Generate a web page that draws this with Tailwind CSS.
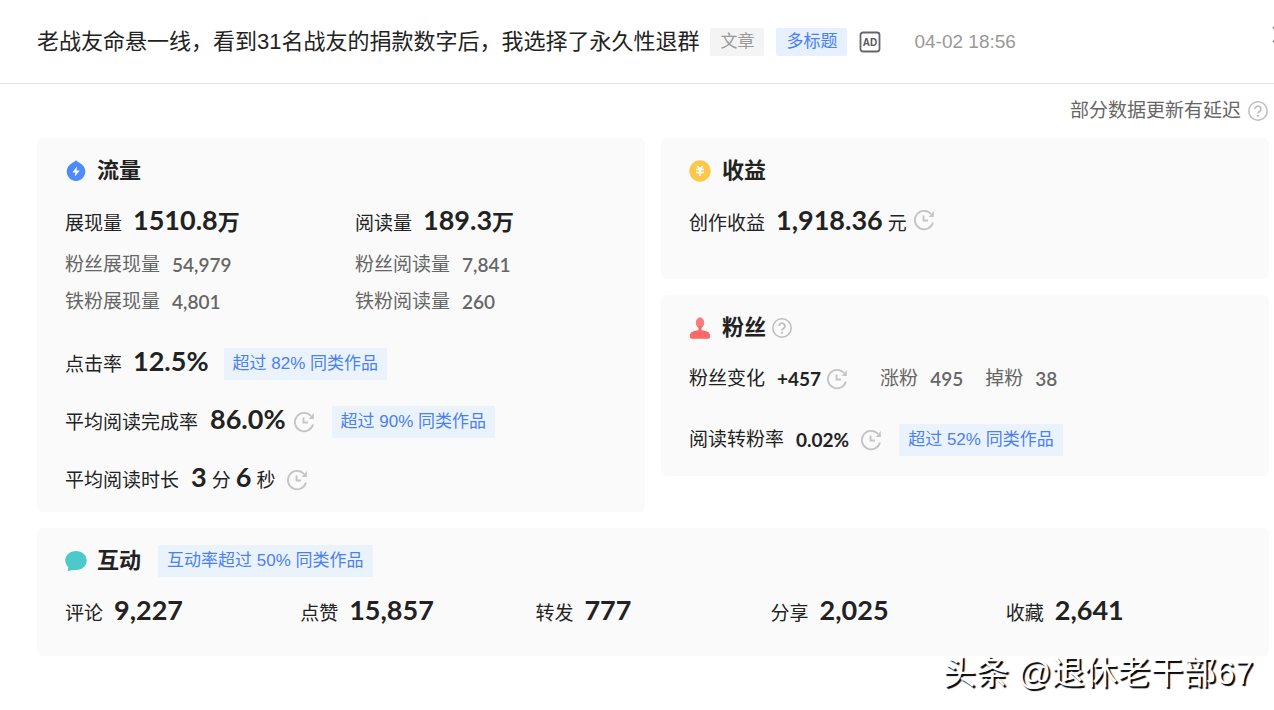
<!DOCTYPE html>
<html lang="zh-CN">
<head>
    <meta charset="UTF-8">
    <meta name="viewport" content="width=device-width, initial-scale=1.0">
    <title>作品数据</title>
    <script src="https://cdn.jsdelivr.net/npm/@tailwindcss/browser@4"></script>
</head>
<body class="relative min-h-screen overflow-x-hidden bg-white font-['Liberation_Sans','Noto_Sans_CJK_SC',sans-serif] text-[19px] leading-7 text-[#222]">
    <!-- Shared icons -->
    <svg class="hidden">
        <symbol id="clock" viewBox="0 0 22 22">
            <g fill="none" stroke="#c4c4c4" stroke-width="1.8">
                <path d="M18 5A9.2 9.2 0 1 0 20 13.5"/>
                <path d="M10.5 6.5v5H15"/>
            </g>
            <path d="M20.8 2v6h-5z" fill="#c4c4c4"/>
        </symbol>
        <symbol id="help" viewBox="0 0 22 22">
            <g fill="none" stroke="#bfbfbf">
                <circle cx="11" cy="11" r="9.2" stroke-width="1.6"/>
                <path d="M8.1 9a2.9 2.9 0 1 1 4.5 2.4c-1.1.7-1.6 1.1-1.6 2.2" stroke-width="1.8"/>
            </g>
            <circle cx="11" cy="15.8" r="1.1" fill="#bfbfbf"/>
        </symbol>
    </svg>

    <header class="flex h-[84px] items-center border-b border-[#e4e4e4] pl-[37px]">
        <h1 class="text-[22px] whitespace-nowrap">老战友命悬一线，看到31名战友的捐款数字后，我选择了永久性退群</h1>
        <span class="ml-[11px] rounded-xs bg-[#f4f4f4] px-[10px] text-[17px] text-[#999]">文章</span>
        <span class="ml-3 rounded-xs bg-[#e6f0ff] px-[10px] text-[17px] text-[#4a80f0]">多标题</span>
        <svg class="ml-3 size-[22px]" viewBox="0 0 22 22" role="img" aria-label="AD">
            <rect x="1.5" y="1.5" width="19" height="19" rx="2.5" fill="none" stroke="#666" stroke-width="1.8"/>
            <text x="11" y="15" text-anchor="middle" font-size="10" font-weight="700" fill="#555">AD</text>
        </svg>
        <time class="ml-[33px] text-[19px] whitespace-nowrap text-[#999]">04-02 18:56</time>
        <button type="button" aria-label="关闭" class="absolute top-[25px] -right-[16px]">
            <svg class="size-5" viewBox="0 0 20 20" fill="none" stroke="#888" stroke-width="1.8"><path d="M3 2l14 15M17 2L3 17"/></svg>
        </button>
    </header>

    <main class="pr-[5px] pl-[37px]">
        <div class="flex h-[54px] items-center justify-end text-[#666]">
            <span>部分数据更新有延迟</span>
            <svg class="ml-[6px] size-[22px]"><use href="#help"/></svg>
        </div>

        <div class="grid grid-cols-2 gap-4">
            <section class="rounded-md bg-[#fafafa] px-7 pt-[19px] pb-[13px]">
                <h2 class="flex items-center gap-[10px] text-[22px] font-bold">
                    <svg class="size-[22px]" viewBox="0 0 22 22">
                        <path d="M11 .3c1.2 1.4 3 2 5.200 3.700a9.300 9.300 0 1 1-10.400 0C8 2.300 9.800 1.700 11 .3z" fill="#4c8dfa"/>
                        <path d="M12 6.500L7.400 12.600h3l-.5 4 4.800-6.200h-3.100z" fill="#fff"/>
                    </svg>
                    流量
                </h2>
                <div class="mt-[17px] grid grid-cols-[290px_1fr]">
                    <div class="flex h-9 items-baseline gap-[11px]">展现量 <b class="font-['Lato','Noto_Sans_CJK_SC',sans-serif] text-[27px] leading-9">1510.8<span class="text-[22px]">万</span></b></div>
                    <div class="flex h-9 items-baseline gap-[11px]">阅读量 <b class="font-['Lato','Noto_Sans_CJK_SC',sans-serif] text-[27px] leading-9">189.3<span class="text-[22px]">万</span></b></div>
                    <div class="mt-[13px] flex gap-3 text-[#666]">粉丝展现量 <b class="font-['Lato',sans-serif] font-semibold">54,979</b></div>
                    <div class="mt-[13px] flex gap-3 text-[#666]">粉丝阅读量 <b class="font-['Lato',sans-serif] font-semibold">7,841</b></div>
                    <div class="mt-[9px] flex gap-3 text-[#666]">铁粉展现量 <b class="font-['Lato',sans-serif] font-semibold">4,801</b></div>
                    <div class="mt-[9px] flex gap-3 text-[#666]">铁粉阅读量 <b class="font-['Lato',sans-serif] font-semibold">260</b></div>
                </div>
                <div class="mt-[27px] flex flex-col gap-[18px]">
                    <div class="flex h-10 items-end">
                        <p class="flex items-baseline gap-[11px] pb-1">点击率 <b class="font-['Lato',sans-serif] text-[27px] leading-9">12.5%</b></p>
                        <span class="mb-[3px] ml-[15px] bg-[#eaf3fc] px-[9px] text-[17px] leading-8 text-[#4a80f0]">超过 82% 同类作品</span>
                    </div>
                    <div class="flex h-10 items-end">
                        <p class="flex items-baseline gap-3 pb-1">平均阅读完成率 <b class="font-['Lato',sans-serif] text-[27px] leading-9">86.0%</b></p>
                        <svg class="mb-2 ml-[7px] size-[22px]"><use href="#clock"/></svg>
                        <span class="mb-[3px] ml-[17px] bg-[#eaf3fc] px-[9px] text-[17px] leading-8 text-[#4a80f0]">超过 90% 同类作品</span>
                    </div>
                    <div class="flex h-10 items-end">
                        <p class="flex items-baseline gap-[5px] pb-1"><span class="mr-[7px]">平均阅读时长</span> <b class="font-['Lato',sans-serif] text-[27px] leading-9">3</b> 分 <b class="font-['Lato',sans-serif] text-[27px] leading-9">6</b> 秒</p>
                        <svg class="mb-2 ml-[11px] size-[22px]"><use href="#clock"/></svg>
                    </div>
                </div>
            </section>

            <div class="flex flex-col gap-4">
                <section class="h-[141px] rounded-md bg-[#fafafa] px-7 pt-[19px]">
                    <h2 class="flex items-center gap-[11px] text-[22px] font-bold">
                        <svg class="size-[22px]" viewBox="0 0 22 22">
                            <circle cx="11" cy="11" r="10.7" fill="#fdc74a"/>
                            <path d="M8.2 6l2.800 3 2.800-3M7 9.500h8M7 12.500h8M11 9v7" fill="none" stroke="#fff" stroke-width="1.6"/>
                        </svg>
                        收益
                    </h2>
                    <div class="mt-[17px] flex h-9 items-baseline">
                        <span>创作收益</span>
                        <b class="ml-[11px] font-['Lato',sans-serif] text-[27px] leading-9">1,918.36</b>
                        <span class="ml-[5px]">元</span>
                        <svg class="ml-[6px] size-[22px] self-center"><use href="#clock"/></svg>
                    </div>
                </section>

                <section class="h-[181px] rounded-md bg-[#fafafa] px-7 pt-[19px]">
                    <h2 class="flex items-center text-[22px] font-bold">
                        <svg class="mr-[11px] size-[22px]" viewBox="0 0 22 22">
                            <ellipse cx="11" cy="5.7" rx="4.2" ry="5.4" fill="#fd7c7c"/>
                            <path d="M9.500 9h3v4.300c5 .2 8.700 2 8.700 5.700 0 2-1.200 2.800-3 2.800H3.800c-1.800 0-3-.8-3-2.800 0-3.700 3.700-5.500 8.700-5.700z" fill="#fb6868"/>
                        </svg>
                        粉丝
                        <svg class="ml-[5px] size-[22px]"><use href="#help"/></svg>
                    </h2>
                    <div class="mt-[23px] flex items-center">
                        <span>粉丝变化</span>
                        <b class="ml-3 font-['Lato',sans-serif]">+457</b>
                        <svg class="ml-[5px] size-[22px]"><use href="#clock"/></svg>
                        <p class="ml-8 flex gap-3 text-[#666]">涨粉 <b class="font-['Lato',sans-serif] font-semibold">495</b></p>
                        <p class="ml-[22px] flex gap-3 text-[#666]">掉粉 <b class="font-['Lato',sans-serif] font-semibold">38</b></p>
                    </div>
                    <div class="mt-[31px] flex items-center">
                        <span>阅读转粉率</span>
                        <b class="ml-3 font-['Lato',sans-serif]">0.02%</b>
                        <svg class="ml-[11px] size-[22px]"><use href="#clock"/></svg>
                        <span class="ml-[17px] bg-[#eaf3fc] px-[9px] text-[17px] leading-8 text-[#4a80f0]">超过 52% 同类作品</span>
                    </div>
                </section>
            </div>
        </div>

        <section class="mt-4 h-32 rounded-md bg-[#fafafa] px-7 pt-[17px]">
            <div class="flex items-center">
                <h2 class="flex items-center gap-[10px] text-[22px] font-bold">
                    <svg class="size-[22px]" viewBox="0 0 22 22">
                        <path d="M11 1C17 1 21.700 5 21.700 10.500S17 20 11 20c-1.800 0-3.500-.2-5 .3l-2.500.8c-.5.1-.7-.2-.6-.6l.4-3.300C1.400 15.400.3 13 .3 10.500.3 5 5 1 11 1z" fill="#4dc9c9"/>
                    </svg>
                    互动
                </h2>
                <span class="ml-[17px] bg-[#eaf3fc] px-[9px] text-[17px] leading-8 text-[#4a80f0]">互动率超过 50% 同类作品</span>
            </div>
            <div class="mt-[15px] grid grid-cols-5">
                <p class="flex items-baseline gap-[11px]">评论 <b class="font-['Lato',sans-serif] text-[27px] leading-9">9,227</b></p>
                <p class="flex items-baseline gap-[11px]">点赞 <b class="font-['Lato',sans-serif] text-[27px] leading-9">15,857</b></p>
                <p class="flex items-baseline gap-[11px]">转发 <b class="font-['Lato',sans-serif] text-[27px] leading-9">777</b></p>
                <p class="flex items-baseline gap-[11px]">分享 <b class="font-['Lato',sans-serif] text-[27px] leading-9">2,025</b></p>
                <p class="flex items-baseline gap-[11px]">收藏 <b class="font-['Lato',sans-serif] text-[27px] leading-9">2,641</b></p>
            </div>
        </section>
    </main>

    <!-- Watermark -->
    <div class="absolute top-[650px] right-[21px] text-[33px] leading-[46px] whitespace-nowrap text-white [text-shadow:2px_2px_1px_#000]">头条 @退休老干部67</div>
</body>
</html>
